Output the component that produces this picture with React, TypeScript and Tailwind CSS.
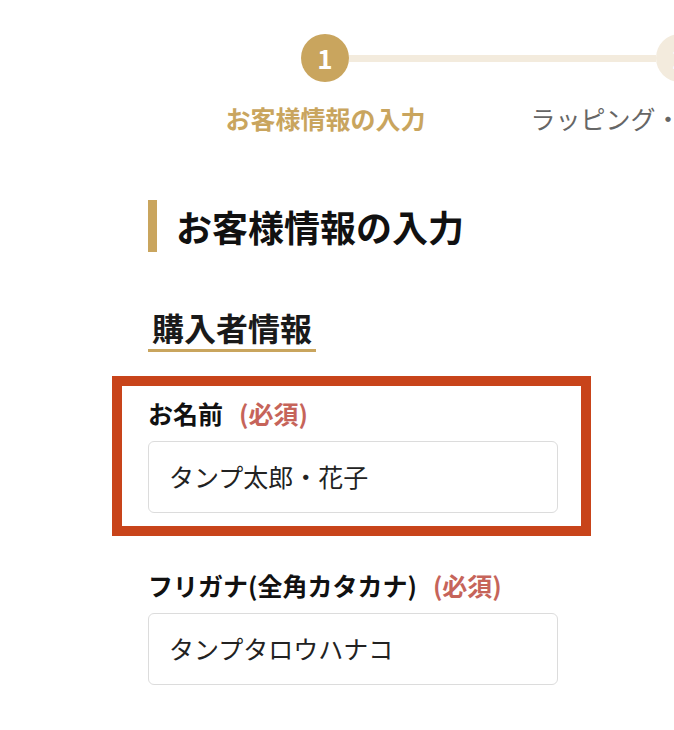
import React from "react";

const font = { fontFamily: '"Noto Sans CJK JP", "Noto Sans", sans-serif' };

function Field({ label, value, boxed }: { label: string; value: string; boxed?: boolean }) {
  return (
    <div className="relative w-[410px]">
      {boxed && (
        <div className="pointer-events-none absolute -left-[36px] -top-[21px] -right-[33px] -bottom-[23px] border-[10px] border-[#c8441a]" />
      )}
      <div className="flex items-center h-[32px] text-[25px] font-bold leading-[32px] text-[#111]">
        <span>{label}</span>
        <span className="ml-[16px] text-[#c6645a]">(必須)</span>
      </div>
      <div className="mt-[12px] h-[72px] rounded-[6px] border border-[#dcdcdc] bg-white flex items-center pl-[20px] text-[25px] text-[#222]">
        {value}
      </div>
    </div>
  );
}

export default function App() {
  return (
    <div className="w-[674px] h-[730px] overflow-hidden bg-white" style={font}>
      {/* Stepper */}
      <div className="pt-[34px]">
        <div className="flex items-center">
          <div className="ml-[301px] w-[48px] h-[48px] shrink-0 rounded-full bg-[#c9a55e] flex items-center justify-center text-white text-[26px] font-bold leading-none">
            1
          </div>
          <div className="w-[307px] h-[7px] shrink-0 bg-[#f3ebdd]" />
          <div className="w-[48px] h-[48px] shrink-0 rounded-full bg-[#f3ebdd] flex items-center justify-center text-white text-[26px] font-bold leading-none">
            2
          </div>
        </div>
        <div className="flex mt-[18px] pl-[148px]">
          <div className="w-[355px] shrink-0 text-center text-[25px] leading-[36px] font-bold text-[#c9a55e] whitespace-nowrap">
            お客様情報の入力
          </div>
          <div className="w-[355px] shrink-0 flex justify-center text-[25px] leading-[36px] text-[#666] whitespace-nowrap">
            <span className="shrink-0">ラッピング・配送方法選択</span>
          </div>
        </div>
      </div>

      {/* Main content */}
      <div className="pl-[148px] mt-[64px]">
        <div className="flex items-center h-[52px]">
          <div className="w-[9px] h-[52px] bg-[#c9a55e] shrink-0" />
          <h1 className="ml-[19px] text-[36px] font-bold leading-[52px] text-[#111]">お客様情報の入力</h1>
        </div>

        <div className="mt-[55px]">
          <h2 className="inline-block px-[4px] pb-[2px] border-b-[3px] border-[#c9a55e] text-[32px] font-bold leading-[40px] text-[#1a1a1a]">
            購入者情報
          </h2>
        </div>

        <div className="mt-[45px]">
          <Field label="お名前" value="タンプ太郎・花子" boxed />
        </div>
        <div className="mt-[56px]">
          <Field label="フリガナ(全角カタカナ)" value="タンプタロウハナコ" />
        </div>
      </div>
    </div>
  );
}
